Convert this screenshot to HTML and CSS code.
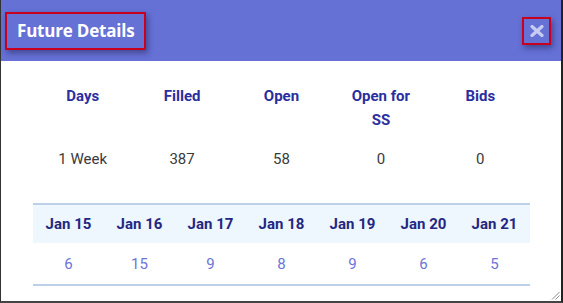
FILE: index.html
```html
<!DOCTYPE html>
<html lang="en">

<head>
    <meta charset="UTF-8">
    <meta name="viewport" content="width=device-width, initial-scale=1.0">
    <title>Future Details</title>
    <link rel="stylesheet" href="styles.css">
</head>

<body>
    <div class="modal">
        <div class="modal-header">
            <h1 class="modal-title">Future Details</h1>
            <button class="close-btn" type="button" aria-label="Close">
                <svg width="14" height="12" viewBox="0 0 14 12">
                    <path d="M2 1.5 L12 10.5 M12 1.5 L2 10.5" stroke="#c9ccf1" stroke-width="3.2" stroke-linecap="round" />
                </svg>
            </button>
        </div>

        <div class="modal-body">
            <div class="summary">
                <div class="summary-head">Days</div>
                <div class="summary-head">Filled</div>
                <div class="summary-head">Open</div>
                <div class="summary-head">Open for SS</div>
                <div class="summary-head">Bids</div>
                <div class="summary-cell">1 Week</div>
                <div class="summary-cell">387</div>
                <div class="summary-cell">58</div>
                <div class="summary-cell">0</div>
                <div class="summary-cell">0</div>
            </div>

            <div class="days-table">
                <div class="days-head">
                    <div>Jan 15</div>
                    <div>Jan 16</div>
                    <div>Jan 17</div>
                    <div>Jan 18</div>
                    <div>Jan 19</div>
                    <div>Jan 20</div>
                    <div>Jan 21</div>
                </div>
                <div class="days-row">
                    <div>6</div>
                    <div>15</div>
                    <div>9</div>
                    <div>8</div>
                    <div>9</div>
                    <div>6</div>
                    <div>5</div>
                </div>
            </div>
        </div>

        <svg class="resize-grip" width="9" height="9" viewBox="0 0 9 9">
            <path d="M8.5 1 L1 8.5 M8.5 4.5 L4.5 8.5" stroke="#8a8a8a" stroke-width="1" />
        </svg>
    </div>
</body>

</html>
```

FILE: styles.css
```css
body {
    margin: 0;
    background-color: #fff;
    font-family: Roboto, "Liberation Sans", Arial, sans-serif;
}

.modal {
    position: relative;
    box-sizing: border-box;
    width: 563px;
    height: 303px;
    border-left: 1px solid #333;
    border-right: 2px solid #222;
    border-bottom: 2px solid #444;
    background-color: #fff;
}

.modal-header {
    display: flex;
    justify-content: space-between;
    align-items: center;
    height: 61px;
    padding: 0 10px 0 4px;
    background-color: #6671d6;
}

.modal-title {
    display: flex;
    align-items: center;
    box-sizing: border-box;
    height: 38px;
    margin: 0;
    padding: 0 9px 0 10px;
    border: 2px solid #c8001e;
    box-shadow: 2px 3px 6px rgba(20, 20, 60, 0.45);
    color: #fff;
    font-family: "Open Sans", "Liberation Sans", sans-serif;
    font-size: 17px;
    font-weight: 700;
    letter-spacing: -0.2px;
}

.close-btn {
    display: flex;
    justify-content: center;
    align-items: center;
    box-sizing: border-box;
    width: 29px;
    height: 28px;
    padding: 0;
    border: 2px solid #c8001e;
    background: transparent;
    box-shadow: 2px 3px 6px rgba(20, 20, 60, 0.45);
}

.modal-body {
    padding: 23px 31px 0 32px;
}

.summary {
    display: grid;
    grid-template-columns: repeat(5, 1fr);
    row-gap: 15px;
    line-height: 24px;
    font-size: 15px;
    text-align: center;
}

.summary-head {
    padding: 0 14px;
    color: #2a2e9e;
    font-weight: 700;
}

.summary-cell {
    color: #3a3a3a;
}

.days-table {
    margin-top: 32px;
    border-top: 2px solid #bdd0e8;
    border-bottom: 2px solid #bdd0e8;
    font-size: 15px;
    text-align: center;
}

.days-head,
.days-row {
    display: grid;
    grid-template-columns: repeat(7, 1fr);
    align-items: center;
}

.days-head {
    height: 38px;
    background-color: #eef6fe;
    color: #232781;
    font-weight: 700;
}

.days-row {
    height: 41px;
    color: #6b74d8;
}

.resize-grip {
    position: absolute;
    right: 1px;
    bottom: 1px;
}
```
